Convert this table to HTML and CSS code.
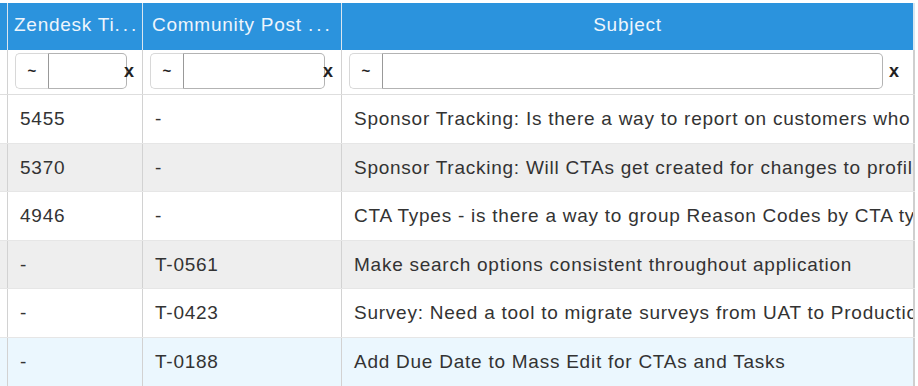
FILE: index.html
```html
<!DOCTYPE html>
<html>
<head>
<meta charset="utf-8">
<link rel="stylesheet" href="styles.css">
</head>
<body>
<div class="grid">
  <div class="row head">
    <div class="cell c0"></div>
    <div class="cell c1 th left">Zendesk Ti<span class="dots">...</span></div>
    <div class="cell c2 th left">Community Post <span class="dots">...</span></div>
    <div class="cell c3 th center">Subject</div>
  </div>
  <div class="row filter">
    <div class="cell c0"></div>
    <div class="cell c1 fcell">
      <div class="fgroup"><span class="addon">~</span><span class="finput w1"></span></div><span class="clear x1">x</span>
    </div>
    <div class="cell c2 fcell">
      <div class="fgroup"><span class="addon">~</span><span class="finput w2"></span></div><span class="clear x2">x</span>
    </div>
    <div class="cell c3 fcell">
      <div class="fgroup"><span class="addon">~</span><span class="finput w3"></span></div><span class="clear x3">x</span>
    </div>
  </div>
  <div class="row data">
    <div class="cell c0"></div>
    <div class="cell c1 td">5455</div>
    <div class="cell c2 td">-</div>
    <div class="cell c3 td">Sponsor Tracking: Is there a way to report on customers who have changed sponsors</div>
  </div>
  <div class="row data stripe">
    <div class="cell c0"></div>
    <div class="cell c1 td">5370</div>
    <div class="cell c2 td">-</div>
    <div class="cell c3 td">Sponsor Tracking: Will CTAs get created for changes to profile</div>
  </div>
  <div class="row data">
    <div class="cell c0"></div>
    <div class="cell c1 td">4946</div>
    <div class="cell c2 td">-</div>
    <div class="cell c3 td">CTA Types - is there a way to group Reason Codes by CTA type</div>
  </div>
  <div class="row data stripe">
    <div class="cell c0"></div>
    <div class="cell c1 td">-</div>
    <div class="cell c2 td">T-0561</div>
    <div class="cell c3 td">Make search options consistent throughout application</div>
  </div>
  <div class="row data">
    <div class="cell c0"></div>
    <div class="cell c1 td">-</div>
    <div class="cell c2 td">T-0423</div>
    <div class="cell c3 td">Survey: Need a tool to migrate surveys from UAT to Production</div>
  </div>
  <div class="row data hover">
    <div class="cell c0"></div>
    <div class="cell c1 td">-</div>
    <div class="cell c2 td">T-0188</div>
    <div class="cell c3 td">Add Due Date to Mass Edit for CTAs and Tasks</div>
  </div>
</div>
</body>
</html>
```
FILE: styles.css
```css
html, body {
  margin: 0;
  padding: 0;
  background: #ffffff;
}
body {
  font-family: "Liberation Sans", Arial, Helvetica, sans-serif;
  font-size: 19px;
  letter-spacing: 0.75px;
  color: #333333;
  overflow: hidden;
}
.grid {
  width: 915px;
  padding-top: 3px;
}
.row {
  display: grid;
  grid-template-columns: 7px 135px 199px 574px;
}
.cell {
  box-sizing: border-box;
  overflow: hidden;
  white-space: nowrap;
}
.c1, .c2, .c3 {
  border-left: 1px solid #d2d2d2;
}
.c3 {
  border-right: 2px solid #cfcfcf;
}
.head {
  height: 47px;
  background: #2b93dd;
}
.head .cell {
  border-color: #dbe6ef;
}
.th {
  color: #eef5fc;
  padding-top: 11px;
  line-height: 22px;
}
.th.left.c1 { padding-left: 6px; }
.th.left.c2 { padding-left: 9px; }
.th.center { text-align: center; }
.dots { letter-spacing: 3px; }
.filter {
  height: 45px;
  border-bottom: 1px solid #dedede;
  box-sizing: border-box;
}
.fcell {
  display: flex;
  align-items: center;
  padding: 3px 0 5px 7px;
}
.fgroup {
  display: flex;
  height: 36px;
}
.addon {
  box-sizing: border-box;
  width: 33px;
  height: 36px;
  border: 1px solid #d8d8d8;
  border-right: none;
  border-radius: 5px 0 0 5px;
  background: #ffffff;
  color: #222222;
  font-weight: bold;
  font-size: 15px;
  line-height: 34px;
  text-align: center;
  letter-spacing: 0;
}
.finput {
  box-sizing: border-box;
  height: 36px;
  border: 1px solid #b3b3b3;
  border-left-color: #999999;
  border-radius: 0 5px 5px 0;
  background: #ffffff;
}
.w1 { width: 79px; }
.w2 { width: 142px; }
.w3 { width: 501px; }
.clear {
  font-weight: bold;
  font-size: 18px;
  color: #222222;
  letter-spacing: 0;
  line-height: 38px;
}
.x1 { margin-left: -3px; }
.x2 { margin-left: -2px; }
.x3 { margin-left: 6px; }
.data {
  height: 48.5px;
  border-bottom: 1px solid #e6e6e6;
  box-sizing: border-box;
  background: #ffffff;
}
.data:last-child { border-bottom: none; }
.data.stripe { background: #eeeeee; }
.data.hover { background: #ebf7fe; }
.td {
  padding-left: 12px;
  line-height: 47px;
}
```
